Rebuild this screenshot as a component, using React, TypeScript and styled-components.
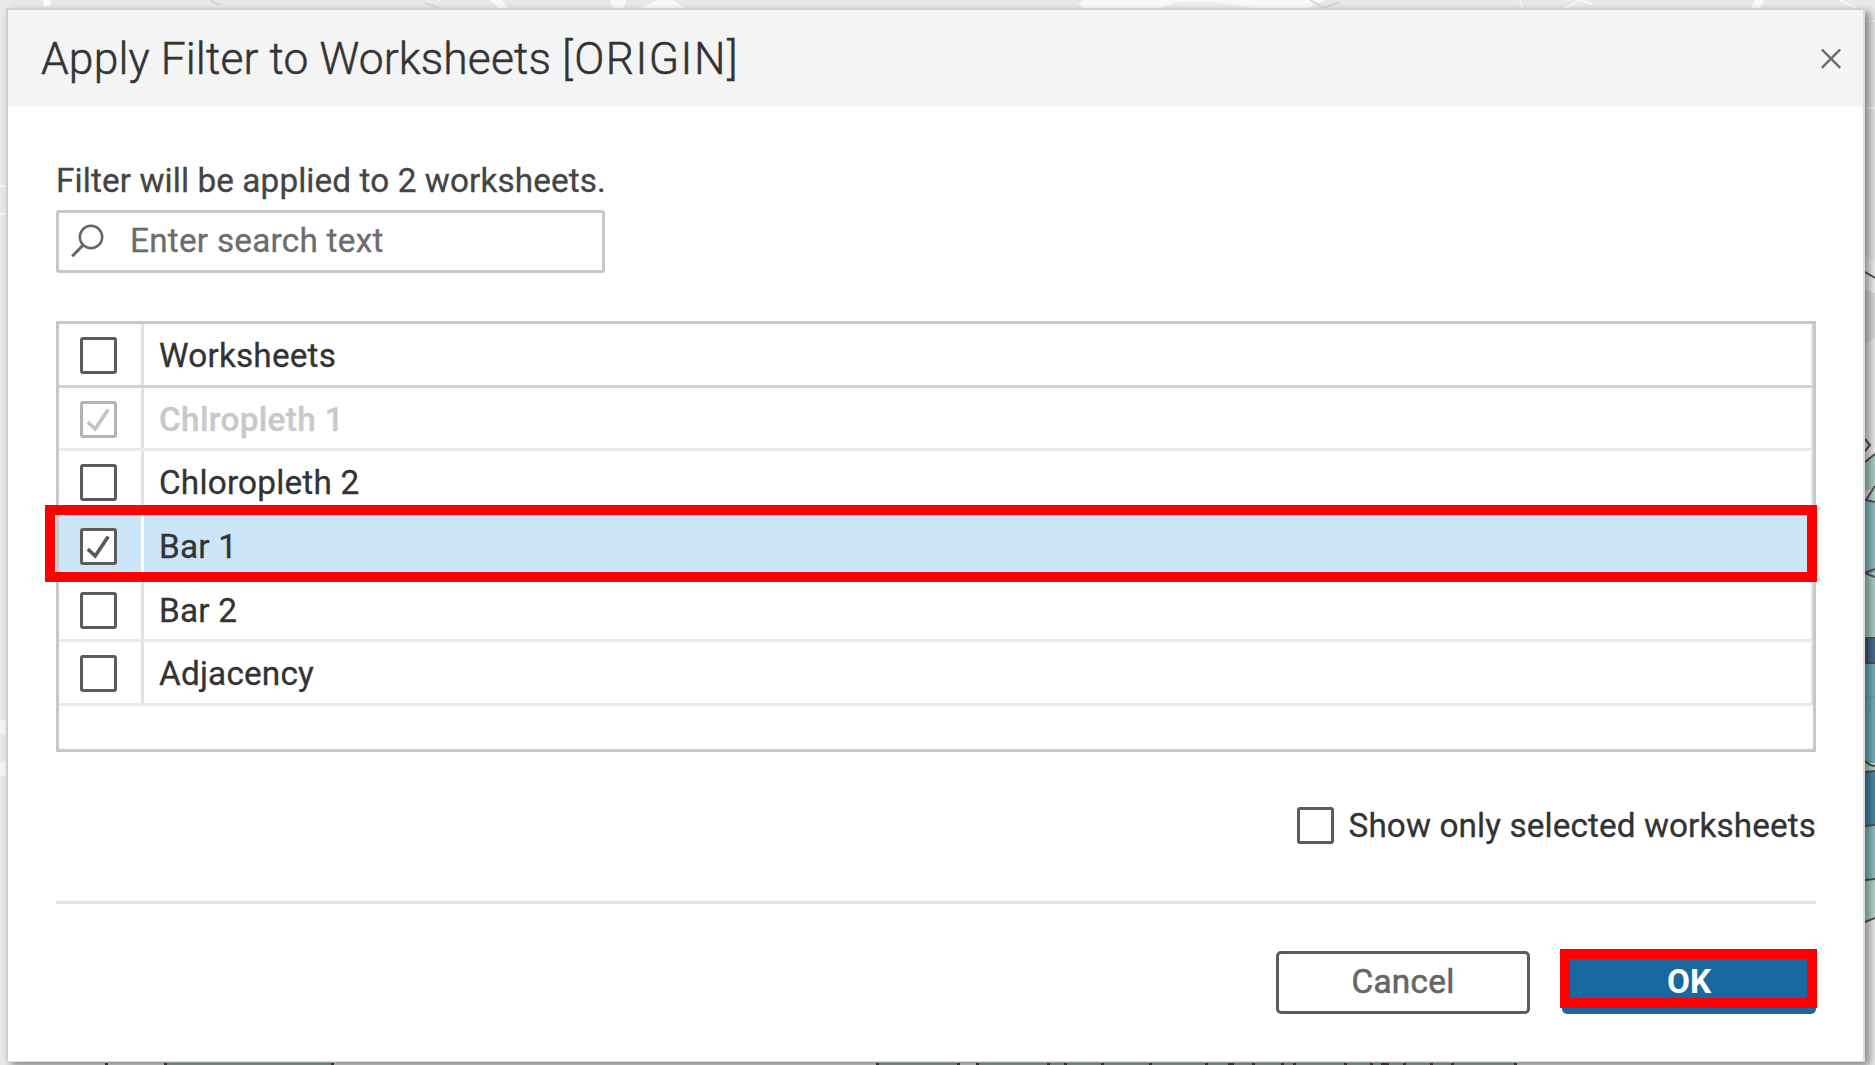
import React, { useState } from 'react';
import styled, { createGlobalStyle, css } from 'styled-components';

const GlobalStyle = createGlobalStyle`
  *, *::before, *::after { box-sizing: border-box; }
  html, body { margin: 0; padding: 0; }
  body {
    background: #e9e9e9;
    font-family: Roboto, "Liberation Sans", sans-serif;
    overflow: hidden;
  }
`;

const Stage = styled.main`
  position: relative;
  width: 1875px;
  height: 1065px;
  padding: 8px 10px 3px 6px;
  overflow: hidden;
`;

const MapBackdrop = styled.svg`
  position: absolute;
  inset: 0;
`;

const Dialog = styled.section`
  position: relative;
  display: flex;
  flex-direction: column;
  width: 100%;
  height: 100%;
  background: #fff;
  border: 2px solid #cfcfcf;
  border-right-color: #dcdcdc;
  border-bottom: 1px solid #dedede;
  box-shadow: 5px 4px 8px 0 rgba(0, 0, 0, 0.42);
`;

const Header = styled.header`
  display: flex;
  align-items: center;
  justify-content: space-between;
  flex: none;
  height: 97px;
  padding: 0 22px 0 33px;
  background: #f4f4f4;
`;

const Title = styled.h1`
  margin: 0;
  font-size: 44.4px;
  font-weight: 300;
  line-height: 60px;
  letter-spacing: 0.13px;
  color: #333;
  white-space: nowrap;
  -webkit-text-stroke: 0.5px #333;
`;

const FieldName = styled.span`
  letter-spacing: 1.5px;
`;

const CloseButton = styled.button`
  display: flex;
  padding: 0;
  border: 0;
  background: none;
`;

const Body = styled.div`
  display: flex;
  flex-direction: column;
  flex: 1;
  padding: 53px 47px 0 48px;
`;

const text = css`
  font-size: 33.3px;
  line-height: 42px;
  letter-spacing: 0.1px;
  white-space: nowrap;
  -webkit-text-stroke: 0.3px currentColor;
`;

const Summary = styled.p`
  ${text}
  margin: 0;
  color: #444;
`;

const SearchField = styled.label`
  display: flex;
  align-items: center;
  gap: 25px;
  width: 549px;
  height: 63px;
  margin-top: 8px;
  padding: 0 10px 1px 12px;
  border: 3px solid #c8c8c8;
  border-radius: 3px;
`;

const SearchInput = styled.input`
  ${text}
  flex: 1;
  min-width: 0;
  padding: 0;
  border: 0;
  outline: 0;
  background: none;
  font-family: inherit;
  letter-spacing: 0.25px;
  &::placeholder { color: #6c6c6c; opacity: 1; }
`;

const Table = styled.div`
  display: flex;
  flex-direction: column;
  width: 1760px;
  height: 431px;
  margin-top: 48px;
  border: 3px solid #c8c8c8;
`;

const Row = styled.div<{ $header?: boolean; $selected?: boolean }>`
  display: grid;
  grid-template-columns: 85px 1fr;
  flex: none;
  height: 63.7px;
  background: ${(p) => (p.$selected ? '#cde5f9' : '#fff')};
  border-right: 2px solid #e4e4e4;
  border-bottom: 3px solid ${(p) => (p.$header ? '#d2d2d2' : '#e9e9e9')};
`;

const CheckCell = styled.div<{ $selected?: boolean }>`
  display: flex;
  align-items: center;
  padding: 2px 0 0 21px;
  border-right: 3px solid ${(p) => (p.$selected ? '#fff' : '#e2e2e2')};
`;

const NameCell = styled.div<{ $disabled?: boolean }>`
  ${text}
  display: flex;
  align-items: center;
  padding: 3px 0 0 15px;
  color: ${(p) => (p.$disabled ? '#c9c9c9' : '#333')};
  font-weight: ${(p) => (p.$disabled ? 500 : 400)};
  letter-spacing: ${(p) => (p.$disabled ? 0.35 : 0.2)}px;
`;

const Box = styled.button<{ $disabled?: boolean }>`
  display: flex;
  flex: none;
  width: 37px;
  height: 37px;
  padding: 0;
  border: 3px solid ${(p) => (p.$disabled ? '#b4b4b4' : '#5c5c5c')};
  border-radius: 3px;
  background: #fff;
  color: ${(p) => (p.$disabled ? '#c4c4c4' : '#5a5a5a')};
`;

const OnlySelected = styled.div`
  ${text}
  display: flex;
  align-items: center;
  justify-content: flex-end;
  gap: 15px;
  height: 44px;
  margin-top: 51px;
  color: #333;
`;

const OnlySelectedLabel = styled.span`
  padding-top: 2px;
`;

const Divider = styled.hr`
  width: 100%;
  height: 3px;
  margin: 54px 0 0;
  border: 0;
  background: #e2e2e2;
`;

const Actions = styled.footer`
  display: flex;
  justify-content: flex-end;
  gap: 32px;
  margin-top: 47px;
`;

const ActionButton = styled.button<{ $primary?: boolean }>`
  ${text}
  display: flex;
  align-items: center;
  justify-content: center;
  width: 254px;
  height: 63px;
  padding: 0 0 2px;
  border: 3px solid ${(p) => (p.$primary ? '#19689f' : '#5c5c5c')};
  border-radius: 5px;
  background: ${(p) => (p.$primary ? '#19689f' : '#fff')};
  color: ${(p) => (p.$primary ? '#fff' : '#666')};
  font-family: inherit;
  font-weight: ${(p) => (p.$primary ? 700 : 400)};
  -webkit-text-stroke-width: ${(p) => (p.$primary ? 0 : 0.6)}px;
  letter-spacing: ${(p) => (p.$primary ? 0 : 0.3)}px;
`;

const Highlight = styled.div<{ $x: number; $y: number; $w: number; $h: number }>`
  position: absolute;
  left: ${(p) => p.$x}px;
  top: ${(p) => p.$y}px;
  width: ${(p) => p.$w}px;
  height: ${(p) => p.$h}px;
  border: 10px solid #f00;
  pointer-events: none;
`;

function Checkbox({ checked, disabled, onClick }: { checked?: boolean; disabled?: boolean; onClick?: () => void }) {
  return (
    <Box $disabled={disabled} onClick={onClick} role="checkbox" aria-checked={!!checked}>
      {checked && (
        <svg width="31" height="31" viewBox="0 0 31 31" fill="none" stroke="currentColor" strokeWidth="3.6">
          <path d="M4.8 18.2 12.2 25 25.2 5.6" />
        </svg>
      )}
    </Box>
  );
}

function Backdrop() {
  return (
    <MapBackdrop width="1875" height="1065" viewBox="0 0 1875 1065" fill="none">
      <g fill="#fafafa">
        <path d="M610 0h16l-2 8h-11zM640 8l18-8h14l14 8zM1085 0h240l-18 8h-222l-7-4zM1755 0h9l-4 8h-9zM490 0l8 8h10l-6-8z" />
        <circle cx="47" cy="3" r="4" />
        <path d="M0 720h7v14H0zM0 762h7v14H0z" fill="#f4f4f4" />
      </g>
      <path d="M1160 8q30-14 90 0z" fill="#ededed" />
      <g stroke="#fafafa" strokeWidth="1.5">
        <path d="M1520 0l2 8M1566 8l14-8 12 4M1840 0l16 8M0 186h8M0 214h8M1866 21h9M1866 108h9" />
      </g>
      <g stroke="#d8d8d8" strokeWidth="2">
        <path d="M210 0l10 5M425 3l14 5M1310 0l14 8 16-6" />
      </g>
      <path d="M1865 255l10 5v35l-10 16z" fill="#f2f2f2" />
      <path d="M1865 290l10 3v45l-10 6z" fill="#dedede" />
      <path d="M1865 344l10-4v110l-10 12z" fill="#efefef" />
      <path d="M1865 462l10-8v36h-10z" fill="#a9d3c8" />
      <path d="M1865 500l10 3v70h-10z" fill="#8fbfc6" />
      <path d="M1865 500l10-14v16z" fill="#b5d9cd" />
      <path d="M1865 573h10v65h-10z" fill="#a9d0c8" />
      <path d="M1865 638h10v25h-10z" fill="#486c9a" />
      <path d="M1865 663h10v100h-10z" fill="#71b0bf" />
      <path d="M1865 762l10 5v5l-10 1z" fill="#b5d9cd" />
      <path d="M1865 772h10v53h-10z" fill="#498cab" />
      <path d="M1865 825h10v55h-10z" fill="#8fc0c4" />
      <path d="M1865 880h10v39l-10 3z" fill="#b5d9cd" />
      <path d="M1865 922l10-3v146h-10z" fill="#eee" />
      <path
        d="M1865 272l10 6M1865 439l5 6-5 6M1865 462l10-8M1875 486l-9 14 9 2M1865 573l10-4M1865 573l10 4M1865 638h10M1867 638v25M1865 663h10M1865 761q5 5 10 5M1865 772l10-1M1865 826l10-1M1865 880l10-1M1865 922l10-4"
        stroke="#555"
        strokeWidth="2"
      />
      <path d="M1865 697h10M1870 697v16" stroke="#5f9fb0" />
      <path d="M165 1063h167v2H165zM877 1063h81v2h-81zM977 1063h538v2H977z" fill="#8fb8ac" />
      <path
        d="M105 1064h3M164 1064h3M331 1064h3M876 1064h3M957 1064h3M976 1064h3M1047 1064h3M1064 1064h3M1101 1064h3M1149 1064h3M1205 1064h3M1228 1064h6M1252 1064h3M1281 1064h3M1293 1064h3M1344 1064h3M1370 1064h3M1381 1064h8M1403 1064h3M1430 1064h3M1451 1064h3M1514 1064h3"
        stroke="#444"
        strokeWidth="2"
      />
    </MapBackdrop>
  );
}

type Sheet = { name: string; checked?: boolean; disabled?: boolean };

const initialSheets: Sheet[] = [
  { name: 'Chlropleth 1', checked: true, disabled: true },
  { name: 'Chloropleth 2' },
  { name: 'Bar 1', checked: true },
  { name: 'Bar 2' },
  { name: 'Adjacency' },
];

export default function App() {
  const [sheets, setSheets] = useState(initialSheets);
  const toggle = (i: number) =>
    setSheets((list) => list.map((s, j) => (j === i && !s.disabled ? { ...s, checked: !s.checked } : s)));
  const count = sheets.filter((s) => s.checked).length;

  return (
    <>
      <GlobalStyle />
      <Stage>
        <Backdrop />
        <Dialog role="dialog">
          <Header>
            <Title>
              Apply Filter to Worksheets <FieldName>[ORIGIN]</FieldName>
            </Title>
            <CloseButton aria-label="Close">
              <svg width="20" height="20" viewBox="0 0 20 20" stroke="#6a6a6a" strokeWidth="2.4" fill="none">
                <path d="M.8.4 19.2 18.8M19.2.4.8 18.8" />
              </svg>
            </CloseButton>
          </Header>
          <Body>
            <Summary>Filter will be applied to {count} worksheets.</Summary>
            <SearchField>
              <svg width="34" height="34" viewBox="0 0 34 34" fill="none" stroke="#666" strokeWidth="2.5">
                <circle cx="20" cy="13" r="11.2" />
                <path d="M12.2 21 1.2 32.2" strokeWidth="3" />
              </svg>
              <SearchInput placeholder="Enter search text" />
            </SearchField>
            <Table>
              <Row $header>
                <CheckCell><Checkbox /></CheckCell>
                <NameCell>Worksheets</NameCell>
              </Row>
              {sheets.map((s, i) => {
                const selected = s.checked && !s.disabled;
                return (
                  <Row key={s.name} $selected={selected}>
                    <CheckCell $selected={selected}>
                      <Checkbox checked={s.checked} disabled={s.disabled} onClick={() => toggle(i)} />
                    </CheckCell>
                    <NameCell $disabled={s.disabled}>{s.name}</NameCell>
                  </Row>
                );
              })}
            </Table>
            <OnlySelected>
              <Checkbox />
              <OnlySelectedLabel>Show only selected worksheets</OnlySelectedLabel>
            </OnlySelected>
            <Divider />
            <Actions>
              <ActionButton>Cancel</ActionButton>
              <ActionButton $primary>OK</ActionButton>
            </Actions>
          </Body>
        </Dialog>
        <Highlight $x={45} $y={505} $w={1772} $h={77} />
        <Highlight $x={1560} $y={949} $w={257} $h={59} />
      </Stage>
    </>
  );
}
